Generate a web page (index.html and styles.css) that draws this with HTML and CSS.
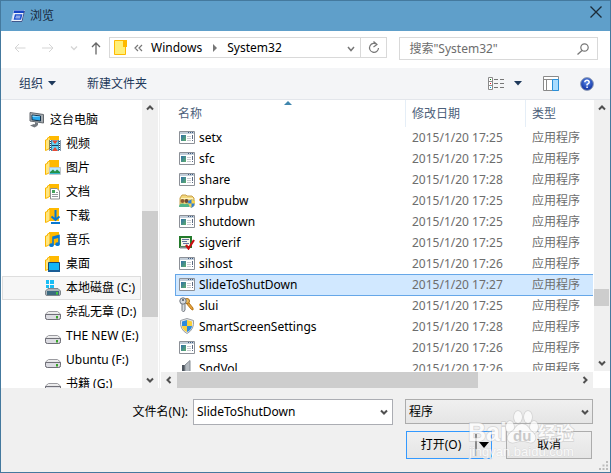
FILE: index.html
```html
<!DOCTYPE html>
<html lang="zh-CN">

<head>
    <meta charset="UTF-8">
    <meta name="viewport" content="width=device-width, initial-scale=1.0">
    <title>浏览</title>
    <link rel="stylesheet" href="styles.css">
</head>

<body>
    <!-- Shared icons -->
    <svg class="sprite" aria-hidden="true">
        <defs>
            <linearGradient id="gScreen" x1="0" y1="0" x2="1" y2="1">
                <stop offset="0" stop-color="#2f6fa8" />
                <stop offset="1" stop-color="#5fae6c" />
            </linearGradient>
            <linearGradient id="gDrive" x1="0" y1="0" x2="0" y2="1">
                <stop offset="0" stop-color="#f4f4f4" />
                <stop offset="1" stop-color="#c4c4ca" />
            </linearGradient>
            <radialGradient id="gHelp" cx="50%" cy="35%" r="65%">
                <stop offset="0" stop-color="#5b8bea" />
                <stop offset="1" stop-color="#0a2a9c" />
            </radialGradient>
        </defs>
        <symbol id="i-down" viewBox="0 0 10 10"><path d="M2 3.5 5 6.5 8 3.5" fill="none" stroke="currentColor" stroke-width="2" /></symbol>
        <symbol id="i-up" viewBox="0 0 10 10"><path d="M2 6.5 5 3.5 8 6.5" fill="none" stroke="currentColor" stroke-width="2" /></symbol>
        <symbol id="i-left" viewBox="0 0 10 10"><path d="M6.5 2 3.5 5 6.5 8" fill="none" stroke="currentColor" stroke-width="2" /></symbol>
        <symbol id="i-right" viewBox="0 0 10 10"><path d="M3.5 2 6.5 5 3.5 8" fill="none" stroke="currentColor" stroke-width="2" /></symbol>
        <symbol id="i-caret" viewBox="0 0 8 5"><path d="M0 0H8L4 4.5Z" fill="currentColor" /></symbol>
        <symbol id="i-folder" viewBox="0 0 16 16">
            <path d="M4 0H14V13H4Z" fill="#ffb900" />
            <path d="M.5 14.500V4L2.500 3.500V2L5 1V12L3 13.500Z" fill="#ffe680" stroke="#f9b500" />
        </symbol>
        <symbol id="i-exe" viewBox="0 0 16 14">
            <path d="M.5.5H15.500V12.500H.5Z" fill="#fff" stroke="#8c9097" />
            <path d="M1 1H15V3H1Z" fill="#c3ced9" />
            <path d="M9 1.500H10M11 1.500H12M13 1.500H14" stroke="#3c5a80" />
            <path d="M2 4H7V10H2Z" fill="url(#gScreen)" />
            <path d="M8 5.500H12M8 7.500H12M8 9.500H12" stroke="#c8cbd0" />
            <path d="M13.500 4V8M13.500 9V10" stroke="#5d6b83" />
        </symbol>
        <symbol id="i-drive" viewBox="0 0 16 16">
            <path d="M3.500 7.500H12.500L15.500 10V13.500Q15.500 15.500 13.500 15.500H2.500Q.5 15.500.5 13.500V10Z" fill="url(#gDrive)" stroke="#9b9ba0" />
            <path d="M.5 10.500H15.500V13.500Q15.500 15.500 13.500 15.500H2.500Q.5 15.500.5 13.500Z" fill="#dcdce2" stroke="#707078" />
            <path d="M11 12H13V14.500H11Z" fill="#39a329" />
        </symbol>
    </svg>

    <div class="dialog">
        <div class="titlebar">
            <svg class="app-icon" width="14" height="12" viewBox="0 0 14 12">
                <path d="M3 .5H13.500L11 11.500H.5Z" fill="#eef2fb" stroke="#c9d6ee" />
                <path d="M3 .5H13.500L13 3H2.500Z" fill="#1444c4" />
                <path d="M4.500 5H10.500L9.500 9H3.500Z" fill="#fff" stroke="#1e50d0" stroke-width="1.500" />
                <path d="M5 7H10" stroke="#1e50d0" />
                <path d="M.5 11.500H11L13.500 1" fill="none" stroke="#40588c" />
            </svg>
            <span class="title">浏览</span>
            <button class="close" type="button" aria-label="关闭">
                <svg width="12" height="12" viewBox="0 0 12 12"><path d="M.5.5 11.500 11.500M11.500.5.5 11.500" stroke="#1c2b38" stroke-width="1.300" /></svg>
            </button>
        </div>

        <div class="navbar">
            <button class="nav-btn" type="button" aria-label="后退" disabled>
                <svg width="12" height="10" viewBox="0 0 12 10"><path d="M1 5H11.500M5 1 1 5 5 9" fill="none" stroke="currentColor" /></svg>
            </button>
            <button class="nav-btn" type="button" aria-label="前进" disabled>
                <svg width="12" height="10" viewBox="0 0 12 10"><path d="M0 5H11M7 1 11 5 7 9" fill="none" stroke="currentColor" /></svg>
            </button>
            <button class="nav-btn recent" type="button" aria-label="最近位置" disabled>
                <svg width="8" height="5" viewBox="0 0 8 5"><path d="M1 .5 4 3.500 7 .5" fill="none" stroke="currentColor" stroke-width="1.300" /></svg>
            </button>
            <button class="nav-btn up" type="button" aria-label="向上">
                <svg width="10" height="13" viewBox="0 0 10 13"><path d="M5 1V12.500M1 5 5 1 9 5" fill="none" stroke="currentColor" stroke-width="1.300" /></svg>
            </button>

            <div class="address">
                <svg class="address-icon" width="13" height="15" viewBox="0 0 13 15">
                    <path d="M.5.5H11.500V14.500H.5Z" fill="#ffef78" stroke="#ffb900" />
                    <path d="M9 0H13V7H9Z" fill="#ffb900" />
                </svg>
                <svg class="more" width="9" height="8" viewBox="0 0 9 8"><path d="M4 1 1 4 4 7M8 1 5 4 8 7" fill="none" stroke="#777" stroke-width="1.200" /></svg>
                <a href="#windows">Windows</a>
                <svg class="sep" width="4" height="8" viewBox="0 0 4 8"><path d="M0 0V8L4 4Z" fill="#777" /></svg>
                <a href="#system32">System32</a>
                <button class="history" type="button" aria-label="以前的位置">
                    <svg width="8" height="6" viewBox="0 0 8 6"><path d="M1 1 4 4.500 7 1" fill="none" stroke="currentColor" stroke-width="1.500" /></svg>
                </button>
                <button class="refresh" type="button" aria-label="刷新">
                    <svg width="12" height="13" viewBox="0 0 12 13"><path d="M9 3.500A4.500 4.500 0 1 0 10.500 7M5.500.5 9 3.500 5.500 6" fill="none" stroke="currentColor" stroke-width="1.200" /></svg>
                </button>
            </div>

            <div class="search">
                <input type="text" aria-label="搜索" placeholder='搜索"System32"'>
                <svg width="12" height="12" viewBox="0 0 12 12"><circle cx="7.500" cy="4.500" r="3.700" fill="none" stroke="#777" stroke-width="1.200" /><path d="M5 7.500.5 11.500" stroke="#777" stroke-width="1.300" /></svg>
            </div>
        </div>

        <div class="toolbar">
            <button type="button">组织 <svg class="caret" width="8" height="5"><use href="#i-caret" /></svg></button>
            <button class="new-folder" type="button">新建文件夹</button>
            <button class="view" type="button" aria-label="更改视图">
                <svg width="17" height="13" viewBox="0 0 17 13">
                    <path d="M.5.5H4.500V12.500H.5ZM.5 4.500H4.500M.5 8.500H4.500" fill="#fff" stroke="#8a8a8a" />
                    <path d="M2 2H3V3H2Z" fill="#107c10" />
                    <path d="M2 6H3V7H2Z" fill="#e81123" />
                    <path d="M2 10H3V11H2Z" fill="#00a2ed" />
                    <path d="M6 2.500H10M12 2.500H16M6 6.500H10M12 6.500H16M6 10.500H10M12 10.500H16" stroke="#777" />
                </svg>
                <svg class="caret" width="8" height="5"><use href="#i-caret" /></svg>
            </button>
            <button class="pane" type="button" aria-label="预览窗格">
                <svg width="16" height="15" viewBox="0 0 16 15">
                    <path d="M.5.5H15.500V14.500H.5ZM.5 3.500H15.500M3.500 3.500V14.500" fill="#fff" stroke="#8a8a8a" />
                    <path d="M9.500 3.500H15.500V14.500H9.500Z" fill="#a9dcff" stroke="#2a8fd8" />
                </svg>
            </button>
            <button class="help" type="button" aria-label="帮助">
                <svg width="14" height="14" viewBox="0 0 14 14">
                    <circle cx="7" cy="7" r="6.400" fill="url(#gHelp)" stroke="#93a0b5" />
                    <path d="M4.800 5.300Q5 3.300 7 3.300T9.200 5.200Q9.200 6.300 7.100 7.400V8.500M7.100 9.500V11" fill="none" stroke="#fff" stroke-width="1.500" />
                </svg>
            </button>
        </div>

        <div class="content">
            <div class="sidebar">
                <ul class="tree">
                    <li><a class="root" href="#pc">
                        <svg width="16" height="16" viewBox="0 0 16 16">
                            <path d="M1 .5 14.500 2.500V11L1 9Z" fill="#a5abb0" stroke="#64696e" />
                            <path d="M3 3 11.500 4V9L3 7.800Z" fill="#27a9ee" stroke="#15344d" />
                            <path d="M3.500 5 11 5V4.500L3.500 3.500Z" fill="#86d4fa" />
                            <path d="M6 10 9 11V13H6ZM1 13.500 5 12 9 13.500 5.500 15.500Z" fill="#73797f" />
                        </svg>这台电脑</a></li>
                    <li><a href="#video">
                        <svg width="16" height="16" viewBox="0 0 16 16"><use href="#i-folder" />
                            <path d="M5 4H15V15H5Z" fill="#64d2f2" />
                            <path d="M5.500 4V15M14.500 4V15" stroke="#173f64" stroke-width="2" />
                            <path d="M5.500 4V15M14.500 4V15" stroke="#fff" stroke-dasharray="1 1" />
                            <path d="M7 4.500H13L10 8ZM7 15 10 11 13 15Z" fill="#e84934" />
                            <path d="M7 9.500H13" stroke="#173f64" />
                        </svg>视频</a></li>
                    <li><a href="#pictures">
                        <svg width="16" height="16" viewBox="0 0 16 16"><use href="#i-folder" />
                            <path d="M4.500 7.500H15.500V14.500H4.500Z" fill="#b9e8fb" stroke="#bfc6ca" />
                            <path d="M5 12 8 9.500 10 11.500 12 9.500 15 12V14H5Z" fill="#23904a" />
                            <path d="M5 13H15V14H5Z" fill="#36b7ca" />
                        </svg>图片</a></li>
                    <li><a href="#documents">
                        <svg width="16" height="16" viewBox="0 0 16 16"><use href="#i-folder" />
                            <path d="M5.500 4.500H12L14.500 7V15H5.500Z" fill="#fff" stroke="#8b8f92" />
                            <path d="M7 6H10V9H7Z" fill="#42a35c" />
                            <path d="M11 8.500H13M7 10.500H13M7 12.500H13" stroke="#949a9e" />
                        </svg>文档</a></li>
                    <li><a href="#downloads">
                        <svg width="16" height="16" viewBox="0 0 16 16"><use href="#i-folder" />
                            <path d="M10.500 2V12M6.500 8.500 10.500 12 14.500 8.500M6 15H15" fill="none" stroke="#0878d0" stroke-width="2" />
                        </svg>下载</a></li>
                    <li><a href="#music">
                        <svg width="16" height="16" viewBox="0 0 16 16"><use href="#i-folder" />
                            <path d="M8 13V5L14 3.500V12M8 6.500 14 5" fill="none" stroke="#0878d0" stroke-width="1.600" />
                            <ellipse cx="6.500" cy="13.200" rx="2.200" ry="1.900" fill="#0878d0" />
                            <ellipse cx="12.500" cy="12.200" rx="2.200" ry="1.900" fill="#0878d0" />
                        </svg>音乐</a></li>
                    <li><a href="#desktop">
                        <svg width="16" height="16" viewBox="0 0 16 16"><use href="#i-folder" />
                            <path d="M3.500 6.500H14.500V15H3.500Z" fill="#12b5f5" stroke="#17466f" />
                            <path d="M3 14H15V16H3Z" fill="#1a5d96" />
                        </svg>桌面</a></li>
                    <li><a class="current" href="#c">
                        <svg width="16" height="16" viewBox="0 0 16 16">
                            <path d="M1 0H4V4H1ZM5 0H9V4H5ZM1 5H4V8H1ZM5 5H9V8H5Z" fill="#19bdf4" />
                            <path d="M3 8.500H13L15.500 11V14Q15.500 15.500 14 15.500H2Q.5 15.500.5 14V11Z" fill="#aeb7bd" stroke="#7f868b" />
                            <path d="M2 11H14V15H2Z" fill="#3d6a80" />
                            <path d="M11 12H13V14.500H11Z" fill="#3fc83a" />
                        </svg>本地磁盘 (C:)</a></li>
                    <li><a href="#d"><svg width="16" height="16"><use href="#i-drive" /></svg>杂乱无章 (D:)</a></li>
                    <li><a href="#e"><svg width="16" height="16"><use href="#i-drive" /></svg>THE NEW (E:)</a></li>
                    <li><a href="#f"><svg width="16" height="16"><use href="#i-drive" /></svg>Ubuntu (F:)</a></li>
                    <li><a href="#g"><svg width="16" height="16"><use href="#i-drive" /></svg>书籍 (G:)</a></li>
                </ul>
                <div class="scroll vertical tree-scroll">
                    <button type="button" aria-label="向上滚动"><svg width="10" height="10"><use href="#i-up" /></svg></button>
                    <div class="before"></div>
                    <div class="thumb"></div>
                    <div class="after"></div>
                    <button type="button" aria-label="向下滚动"><svg width="10" height="10"><use href="#i-down" /></svg></button>
                </div>
            </div>

            <div class="files">
                <div class="files-top">
                    <div class="list">
                        <svg class="sort" width="8" height="4" viewBox="0 0 8 4"><path d="M0 4 4 0 8 4Z" fill="#3f86ad" /></svg>
                        <table>
                            <thead>
                                <tr><th class="col-name">名称</th><th class="col-date">修改日期</th><th>类型</th></tr>
                            </thead>
                            <tbody>
                                <tr><td><svg width="16" height="14"><use href="#i-exe" /></svg>setx</td><td>2015/1/20 17:25</td><td>应用程序</td></tr>
                                <tr><td><svg width="16" height="14"><use href="#i-exe" /></svg>sfc</td><td>2015/1/20 17:25</td><td>应用程序</td></tr>
                                <tr><td><svg width="16" height="14"><use href="#i-exe" /></svg>share</td><td>2015/1/20 17:28</td><td>应用程序</td></tr>
                                <tr>
                                    <td><svg width="16" height="14" viewBox="0 0 16 14">
                                        <path d="M1 4 3 1H7L8 2H13L15 4V12H1Z" fill="#f3d77c" stroke="#c8a04a" />
                                        <path d="M2 4.500H14" stroke="#fff3bd" />
                                        <circle cx="3.500" cy="7" r="2" fill="#8c5a34" /><circle cx="7.500" cy="7" r="2" fill="#6c4a34" />
                                        <path d="M0 13Q0 9.500 3.500 9.500T7 13ZM5 13Q5 9.500 8 9.500T10 13Z" fill="#51b58a" />
                                        <path d="M9 7 12.500 5.500 16 7Q16 12 12.500 14Q9 12 9 7Z" fill="#2e7fd6" />
                                        <path d="M12.500 5.500 16 7V9.500H12.500ZM9 9.500H12.500V14Q10 12 9 9.500Z" fill="#f8d44a" />
                                    </svg>shrpubw</td>
                                    <td>2015/1/20 17:25</td><td>应用程序</td>
                                </tr>
                                <tr><td><svg width="16" height="14"><use href="#i-exe" /></svg>shutdown</td><td>2015/1/20 17:25</td><td>应用程序</td></tr>
                                <tr>
                                    <td><svg width="16" height="14" viewBox="0 0 16 14">
                                        <path d="M1 1H12V11H1Z" fill="#f5f5e8" stroke="#247a2c" stroke-width="2" />
                                        <path d="M3 3.500H10M3 5.500H8M4 7.500H10" stroke="#6470a0" />
                                        <path d="M1 11.500H8" stroke="#85898c" stroke-width="2" />
                                        <path d="M7 9 9.500 12.500 15 4" fill="none" stroke="#c90d10" stroke-width="2.200" />
                                    </svg>sigverif</td>
                                    <td>2015/1/20 17:25</td><td>应用程序</td>
                                </tr>
                                <tr><td><svg width="16" height="14"><use href="#i-exe" /></svg>sihost</td><td>2015/1/20 17:26</td><td>应用程序</td></tr>
                                <tr class="selected"><td><svg width="16" height="14"><use href="#i-exe" /></svg>SlideToShutDown</td><td>2015/1/20 17:27</td><td>应用程序</td></tr>
                                <tr>
                                    <td><svg width="16" height="16" viewBox="0 0 16 16">
                                        <path d="M8 3.500 14 11V13L12.500 12.500 7 6" fill="#e8a33a" stroke="#b57418" />
                                        <circle cx="8" cy="4" r="2.500" fill="#efbc5c" stroke="#a86f1d" />
                                        <path d="M3 6V13.500L4.500 15 6 13V6" fill="#d9dde0" stroke="#757b82" />
                                        <circle cx="4" cy="4" r="3.200" fill="#d6dade" stroke="#6c737b" />
                                        <circle cx="4" cy="3" r="1" fill="#4b535b" />
                                    </svg>slui</td>
                                    <td>2015/1/20 17:25</td><td>应用程序</td>
                                </tr>
                                <tr>
                                    <td><svg width="16" height="16" viewBox="0 0 16 16">
                                        <path d="M8 .5 14.500 2.500Q15.500 11.500 8 15.500Q.5 11.500 1.500 2.500Z" fill="#e7e9eb" stroke="#9a9fa4" />
                                        <path d="M8 2 3 3.500V8H8ZM8 8H13Q12.500 12 8 14Z" fill="#2b8ade" />
                                        <path d="M8 2 13 3.500V8H8ZM3 8H8V14Q3.500 12 3 8Z" fill="#f9cf3a" />
                                    </svg>SmartScreenSettings</td>
                                    <td>2015/1/20 17:28</td><td>应用程序</td>
                                </tr>
                                <tr><td><svg width="16" height="14"><use href="#i-exe" /></svg>smss</td><td>2015/1/20 17:26</td><td>应用程序</td></tr>
                                <tr>
                                    <td><svg width="16" height="16" viewBox="0 0 16 16">
                                        <path d="M3 5H6V12H3Z" fill="#4e565f" />
                                        <path d="M6 5 11 .5V15.500L6 12Z" fill="#b4bac0" stroke="#868d94" />
                                    </svg>SndVol</td>
                                    <td>2015/1/20 17:26</td><td>应用程序</td>
                                </tr>
                            </tbody>
                        </table>
                    </div>
                    <div class="scroll vertical list-scroll">
                        <button type="button" aria-label="向上滚动"><svg width="10" height="10"><use href="#i-up" /></svg></button>
                        <div class="before"></div>
                        <div class="thumb"></div>
                        <div class="after"></div>
                        <button type="button" aria-label="向下滚动"><svg width="10" height="10"><use href="#i-down" /></svg></button>
                    </div>
                </div>
                <div class="scroll horizontal">
                    <button type="button" aria-label="向左滚动"><svg width="10" height="10"><use href="#i-left" /></svg></button>
                    <div class="thumb"></div>
                    <div class="after"></div>
                    <button type="button" aria-label="向右滚动"><svg width="10" height="10"><use href="#i-right" /></svg></button>
                </div>
            </div>
        </div>

        <form class="footer">
            <label for="filename">文件名(N):</label>
            <div class="combo">
                <input type="text" id="filename" name="filename" value="SlideToShutDown">
                <button type="button" aria-label="显示文件名列表"><svg width="10" height="10"><use href="#i-down" /></svg></button>
            </div>
            <div class="filetype">
                <select name="filetype" aria-label="文件类型">
                    <option>程序</option>
                </select>
                <svg width="10" height="10"><use href="#i-down" /></svg>
            </div>
            <div class="actions">
                <div class="split">
                    <button class="open" type="button">打开(O)</button>
                    <button class="open-more" type="button" aria-label="打开方式"><svg width="10" height="6" viewBox="0 0 10 6"><path d="M0 0H10L5 6Z" fill="#000" /></svg></button>
                </div>
                <button class="cancel" type="button">取消</button>
            </div>

            <svg class="watermark" width="112" height="54" viewBox="0 0 112 54" aria-hidden="true">
                <g fill="#fff" stroke="#b5b5b5" stroke-opacity=".6" stroke-width="1.500" paint-order="stroke">
                    <text class="mark-big" x="0" y="35">Bai</text>
                    <ellipse cx="42" cy="21" rx="4" ry="6" />
                    <ellipse cx="50" cy="11" rx="4" ry="6" />
                    <ellipse cx="60" cy="11" rx="4" ry="6" />
                    <ellipse cx="66" cy="21" rx="4" ry="6" />
                    <path d="M54 18Q59 18 62 24Q69 29 67 34Q65 38 60 36Q54 34 48 36Q42 38 40 34Q38 29 46 24Q49 18 54 18Z" />
                    <text class="mark-cn" x="70" y="34">经验</text>
                    <text class="mark-url" x="1" y="50">jingyan.baidu.com</text>
                </g>
                <text class="mark-du" x="45" y="35">du</text>
            </svg>
            <svg class="grip" width="9" height="9" viewBox="0 0 9 9"><path d="M7 0H9V2H7ZM3.500 3.500H5.500V5.500H3.500ZM7 3.500H9V5.500H7ZM0 7H2V9H0ZM3.500 7H5.500V9H3.500ZM7 7H9V9H7Z" fill="#bcbcbc" /></svg>
        </form>
    </div>
</body>

</html>
```
FILE: styles.css
```css
* {
    box-sizing: border-box;
}

body {
    margin: 0;
    font-family: "Noto Sans", "Noto Sans CJK SC", sans-serif;
    font-size: 12px;
    line-height: 20px;
    color: #000;
}

button, input, select {
    font: inherit;
    color: inherit;
    margin: 0;
    padding: 0;
    border: none;
    background: none;
    outline: none;
}

svg {
    display: block;
    flex: none;
}

a {
    color: inherit;
    text-decoration: none;
}

.sprite {
    position: absolute;
    width: 0;
    height: 0;
}

.dialog {
    display: flex;
    flex-direction: column;
    height: 100vh;
    border: 1px solid #44799e;
    background: #fff;
    overflow: hidden;
}

/* title bar */
.titlebar {
    display: flex;
    align-items: center;
    flex: none;
    height: 30px;
    padding: 0 8px 0 10px;
    background: #5f9fca;
}

.title {
    flex: 1;
    margin-left: 5px;
    color: #15283a;
}

.close {
    height: 12px;
    margin-bottom: 8px;
}

/* navigation */
.navbar {
    display: flex;
    align-items: flex-start;
    flex: none;
    height: 37px;
    padding: 6px 12px 0 13px;
}

.nav-btn {
    display: flex;
    align-items: center;
    height: 22px;
    margin-right: 16px;
    color: #666;
}

.nav-btn:disabled {
    color: #d5d5d5;
}

.nav-btn.recent {
    margin-right: 13px;
}

.nav-btn.up {
    margin-right: 8px;
}

.address {
    display: flex;
    align-items: center;
    flex: 1;
    height: 21px;
    padding-left: 4px;
    border: 1px solid #d9d9d9;
}

.more {
    margin: 0 8px 0 7px;
}

.sep {
    margin: 0 10px 0 11px;
}

.history {
    margin-left: auto;
    padding: 2px 5px 0;
    color: #777;
}

.refresh {
    display: flex;
    align-items: center;
    justify-content: center;
    width: 26px;
    height: 100%;
    border-left: 1px solid #d9d9d9;
    color: #777;
}

.search {
    display: flex;
    align-items: center;
    flex: none;
    width: 34%;
    height: 23px;
    margin-left: 12px;
    padding: 0 8px 0 9px;
    border: 1px solid #d9d9d9;
}

.search input {
    flex: 1;
    min-width: 0;
}

.search input::placeholder {
    color: #6d6d6d;
    opacity: 1;
}

/* toolbar */
.toolbar {
    display: flex;
    align-items: center;
    flex: none;
    height: 32px;
    padding: 0 16px 0 18px;
    background: #f4f5f7;
    border-bottom: 1px solid #e3e6eb;
    color: #1e395b;
}

.toolbar button {
    display: flex;
    align-items: center;
}

.toolbar .caret {
    margin-left: 5px;
}

.new-folder {
    margin-left: 31px;
}

.toolbar .view {
    margin-left: auto;
}

.view .caret {
    margin-left: 9px;
}

.pane {
    margin-left: 21px;
}

.help {
    margin-left: 21px;
}

/* main area */
.content {
    display: flex;
    flex: 1;
    min-height: 0;
}

.sidebar {
    display: flex;
    flex: none;
    width: 159px;
    padding-right: 1px;
    border-right: 1px solid #f0f0f0;
}

.tree {
    flex: 1;
    min-width: 0;
    margin: 0;
    padding: 8px 1px 0;
    list-style: none;
    overflow: hidden;
}

.tree a {
    display: flex;
    align-items: center;
    gap: 5px;
    height: 24px;
    padding-left: 42px;
    border: 1px solid transparent;
    white-space: nowrap;
    overflow: hidden;
}

.tree .root {
    padding-left: 26px;
}

.tree .current {
    background: #f7f7f7;
    border-color: #dedede;
}

.scroll {
    display: flex;
    flex: none;
    background: #f0f0f0;
    color: #505050;
}

.scroll button {
    display: flex;
    align-items: center;
    justify-content: center;
    flex: none;
    width: 16px;
    height: 16px;
}

.scroll .thumb {
    background: #cdcdcd;
}

.vertical {
    flex-direction: column;
    width: 16px;
}

.tree-scroll .before {
    flex: 95;
}

.tree-scroll .thumb {
    flex: 106;
}

.tree-scroll .after {
    flex: 55;
}

.list-scroll .before {
    flex: 173;
}

.list-scroll .thumb {
    flex: 17;
    margin-right: 1px;
}

.list-scroll .after {
    flex: 49;
}

.horizontal {
    height: 16px;
    margin: 1px 17px 0 1px;
}

.horizontal .thumb {
    flex: 299;
}

.horizontal .after {
    flex: 99;
}

.files {
    display: flex;
    flex-direction: column;
    flex: 1;
    min-width: 0;
}

.files-top {
    display: flex;
    flex: 1;
    min-height: 0;
}

.list {
    position: relative;
    flex: 1;
    min-width: 0;
    padding: 0 1px 0 15px;
    overflow: hidden;
}

.sort {
    position: absolute;
    top: 1px;
    left: 124px;
}

table {
    width: 100%;
    table-layout: fixed;
    border-collapse: separate;
    border-spacing: 0;
}

th {
    height: 27px;
    padding: 0 0 0 6px;
    border-left: 1px solid #e5eef7;
    font-weight: normal;
    text-align: left;
    color: #4c607a;
}

.col-name {
    width: 230px;
    padding-left: 3px;
    border-left: none;
}

.col-date {
    width: 120px;
}

td {
    height: 21px;
    padding: 0 0 0 7px;
    line-height: 19px;
    color: #6d6d6d;
    white-space: nowrap;
}

td:first-child {
    padding-left: 4px;
    color: #000;
}

td svg {
    display: inline-block;
    margin: 0 4px 2px 0;
    vertical-align: middle;
}

.selected td {
    background: #d1e8ff;
    box-shadow: inset 0 1px #66a7e8, 0 1px #66a7e8;
}

.selected td:first-child {
    box-shadow: inset 1px 1px #66a7e8, 0 1px #66a7e8;
}

/* file name and buttons */
.footer {
    position: relative;
    display: grid;
    grid-template-columns: 192px 1fr 188px;
    row-gap: 6px;
    flex: none;
    padding: 11px 17px 13px 0;
    background: #f0f0f0;
}

.footer label {
    padding-right: 5px;
    line-height: 26px;
    text-align: right;
}

.combo {
    display: flex;
    height: 26px;
    margin-right: 12px;
    padding: 0 3px;
    border: 1px solid #abadb3;
    background: #fff;
}

.combo input {
    flex: 1;
    min-width: 0;
}

.combo button,
.filetype svg {
    color: #505050;
}

.filetype {
    position: relative;
    height: 25px;
}

.filetype select {
    width: 100%;
    height: 25px;
    padding-left: 3px;
    border: 1px solid #acacac;
    background: linear-gradient(#f0f0f0, #e5e5e5);
    appearance: none;
}

.filetype svg {
    position: absolute;
    top: 8px;
    right: 3px;
    pointer-events: none;
}

.actions {
    display: flex;
    gap: 14px;
    grid-column: 3;
    padding: 0 1px;
}

.split,
.cancel {
    flex: 1;
    height: 28px;
    border: 1px solid #acacac;
    background: linear-gradient(#f0f0f0, #e5e5e5);
}

.split {
    display: flex;
    align-items: center;
    border-color: #3399ff;
}

.open {
    flex: 1;
}

.open-more {
    display: flex;
    align-items: center;
    width: 16px;
    height: 22px;
    padding-left: 2px;
    border-left: 2px solid #8a8a8a;
}

.watermark {
    position: absolute;
    right: 30px;
    bottom: 12px;
    opacity: .75;
    pointer-events: none;
}

.mark-big {
    font: bold 25px "Liberation Sans", sans-serif;
}

.mark-cn {
    font: bold 18px "Noto Sans CJK SC", sans-serif;
}

.mark-url {
    font: 13px "Liberation Sans", sans-serif;
    stroke-width: 1px;
    stroke-opacity: .3;
}

.mark-du {
    font: bold 15px "Liberation Sans", sans-serif;
    fill: #bdbdbd;
}

.grip {
    position: absolute;
    right: 2px;
    bottom: 2px;
}
```
